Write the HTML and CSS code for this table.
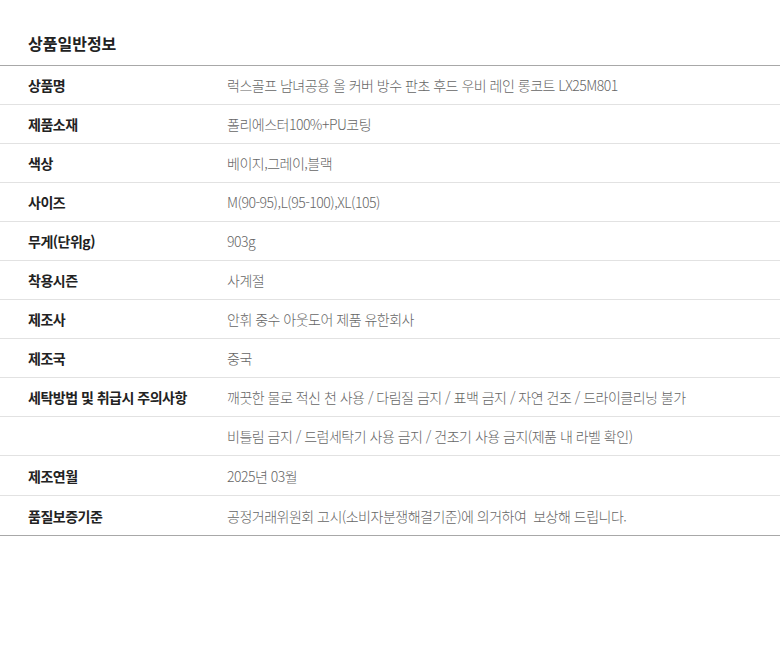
FILE: index.html
```html
<!DOCTYPE html>
<html lang="ko">
<head>
<meta charset="utf-8">
<link rel="stylesheet" href="styles.css">
</head>
<body>
<div class="page">
  <h2 class="title">상품일반정보</h2>
  <table class="info">
    <tr><th>상품명</th><td>럭스골프 남녀공용 올 커버 방수 판초 후드 우비 레인 롱코트 LX25M801</td></tr>
    <tr><th>제품소재</th><td>폴리에스터100%+PU코팅</td></tr>
    <tr><th>색상</th><td>베이지,그레이,블랙</td></tr>
    <tr><th>사이즈</th><td>M(90-95),L(95-100),XL(105)</td></tr>
    <tr><th>무게(단위g)</th><td>903g</td></tr>
    <tr><th>착용시즌</th><td>사계절</td></tr>
    <tr><th>제조사</th><td>안휘 중수 아웃도어 제품 유한회사</td></tr>
    <tr><th>제조국</th><td>중국</td></tr>
    <tr><th>세탁방법 및 취급시 주의사항</th><td>깨끗한 물로 적신 천 사용 / 다림질 금지 / 표백 금지 / 자연 건조 / 드라이클리닝 불가</td></tr>
    <tr><th></th><td>비틀림 금지 / 드럼세탁기 사용 금지 / 건조기 사용 금지(제품 내 라벨 확인)</td></tr>
    <tr class="tall"><th>제조연월</th><td>2025년 03월</td></tr>
    <tr class="tall last"><th>품질보증기준</th><td>공정거래위원회 고시(소비자분쟁해결기준)에 의거하여&nbsp; 보상해 드립니다.</td></tr>
  </table>
</div>
</body>
</html>
```
FILE: styles.css
```css
html, body {
  margin: 0;
  padding: 0;
  background: #fff;
}
.page {
  font-family: "Noto Sans CJK KR", "Noto Sans", sans-serif;
  color: #222;
}
.title {
  margin: 0;
  padding: 30px 28px 0;
  height: 35px;
  font-size: 16px;
  font-weight: 700;
  line-height: 26px;
  color: #222;
}
.info {
  width: 100%;
  border-collapse: collapse;
  border-top: 1px solid #a8a8a8;
  border-bottom: 1px solid #a8a8a8;
}
.info th, .info td {
  height: 38px;
  padding: 0;
  font-size: 14px;
  letter-spacing: -0.5px;
  text-align: left;
  vertical-align: middle;
  border-bottom: 1px solid #e2e2e2;
}
.info th {
  width: 199px;
  padding-left: 28px;
  font-weight: 700;
  color: #222;
}
.info td {
  font-weight: 300;
  color: #666;
}
.info tr.tall th, .info tr.tall td {
  height: 39px;
}
.info tr.last th, .info tr.last td {
  border-bottom: none;
}
```
